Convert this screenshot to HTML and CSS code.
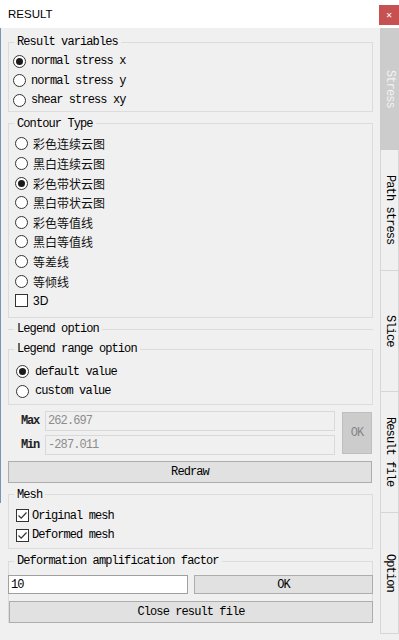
FILE: index.html
```html
<!DOCTYPE html>
<html>
<head>
<meta charset="utf-8">
<link rel="stylesheet" href="styles.css">
</head>
<body>
<div class="titlebar">
  <span class="title">RESULT</span>
  <span class="close">✕</span>
</div>
<div class="main">
  <div class="content">
    <fieldset class="group g-result">
      <legend>Result variables</legend>
      <div class="row p4"><span class="radio checked"></span><span>normal stress x</span></div>
      <div class="row p4"><span class="radio"></span><span>normal stress y</span></div>
      <div class="row p4"><span class="radio"></span><span>shear stress xy</span></div>
    </fieldset>

    <fieldset class="group g-contour">
      <legend>Contour Type</legend>
      <div class="row p6"><span class="radio"></span><span class="cjk">彩色连续云图</span></div>
      <div class="row p6"><span class="radio"></span><span class="cjk">黑白连续云图</span></div>
      <div class="row p6"><span class="radio checked"></span><span class="cjk">彩色带状云图</span></div>
      <div class="row p6"><span class="radio"></span><span class="cjk">黑白带状云图</span></div>
      <div class="row p6"><span class="radio"></span><span class="cjk">彩色等值线</span></div>
      <div class="row p6"><span class="radio"></span><span class="cjk">黑白等值线</span></div>
      <div class="row p6"><span class="radio"></span><span class="cjk">等差线</span></div>
      <div class="row p6"><span class="radio"></span><span class="cjk">等倾线</span></div>
      <div class="row p6"><span class="check"></span><span class="sans">3D</span></div>
    </fieldset>

    <fieldset class="group g-legend">
      <legend>Legend option</legend>
      <fieldset class="group g-range">
        <legend>Legend range option</legend>
        <div class="row p7"><span class="radio checked"></span><span>default value</span></div>
        <div class="row p7"><span class="radio"></span><span>custom value</span></div>
      </fieldset>
    </fieldset>

    <div class="range">
      <div class="range-fields">
        <div class="field"><span class="lbl">Max</span><span class="input disabled">262.697</span></div>
        <div class="field"><span class="lbl">Min</span><span class="input disabled">-287.011</span></div>
      </div>
      <span class="btn ok-disabled">OK</span>
    </div>

    <div class="btn wide redraw">Redraw</div>

    <fieldset class="group g-mesh">
      <legend>Mesh</legend>
      <div class="row p7c"><span class="check checked"><svg width="11" height="11" viewBox="0 0 11 11"><path d="M1.5 5.5 L4.2 8.2 L9.5 2.5" fill="none" stroke="#333" stroke-width="1.2"/></svg></span><span>Original mesh</span></div>
      <div class="row p7c"><span class="check checked"><svg width="11" height="11" viewBox="0 0 11 11"><path d="M1.5 5.5 L4.2 8.2 L9.5 2.5" fill="none" stroke="#333" stroke-width="1.2"/></svg></span><span>Deformed mesh</span></div>
    </fieldset>

    <fieldset class="group g-deform">
      <legend>Deformation amplification factor</legend>
      <div class="deform-row">
        <span class="input white">10</span>
        <span class="btn ok">OK</span>
      </div>
      <div class="btn wide closefile">Close result file</div>
    </fieldset>
  </div>

  <div class="tabs">
    <div class="tab active">Stress</div>
    <div class="tab">Path stress</div>
    <div class="tab">Slice</div>
    <div class="tab">Result file</div>
    <div class="tab">Option</div>
  </div>
</div>
</body>
</html>
```
FILE: styles.css
```css
* { box-sizing: border-box; }
html, body { margin: 0; padding: 0; }
body {
  width: 399px;
  height: 640px;
  overflow: hidden;
  background: linear-gradient(#7a93b8, #7a93b8) 0 28px / 1px 475px no-repeat, #f0f0f0;
  font-family: "Liberation Mono", "Noto Sans CJK SC", monospace;
  font-size: 12px;
  letter-spacing: -0.9px;
  color: #000;
}
legend, .row, .btn, .input, .lbl, .tab {
  font-family: "Liberation Mono", "Noto Sans CJK SC", monospace;
}
.titlebar {
  height: 28px;
  background: #fff;
  display: flex;
  justify-content: space-between;
  align-items: flex-start;
}
.title {
  font-family: "Liberation Sans", Arial, sans-serif;
  font-size: 11.5px;
  letter-spacing: 0;
  line-height: 28px;
  padding-left: 8px;
  color: #000;
}
.close {
  margin-top: 5px;
  width: 20px;
  height: 20px;
  background: #c75050;
  color: #fff;
  font-family: "DejaVu Sans", sans-serif;
  font-size: 8px;
  font-weight: bold;
  letter-spacing: 0;
  display: flex;
  align-items: center;
  justify-content: center;
}
.main {
  display: flex;
  height: 612px;
}
.content {
  width: 380px;
  padding-left: 8px;
}
.group {
  margin: 0;
  width: 365px;
  padding: 0;
  border: 1px solid #dcdcdc;
  min-width: 0;
}
.group > legend {
  margin-left: 5px;
  padding: 0 3px;
  line-height: 14px;
  height: 14px;
}
.row {
  display: flex;
  align-items: center;
  height: 19.6px;
  gap: 5px;
  white-space: nowrap;
}
.p4 { padding-left: 4px; }
.p6 { padding-left: 6px; gap: 5px; }
.p7 { padding-left: 7px; gap: 6px; }
.p7c { padding-left: 7px; gap: 3px; }
.row .cjk {
  font-family: "Noto Sans CJK SC", sans-serif;
  letter-spacing: 0;
  font-size: 12px;
  color: #111;
}
.row .sans {
  font-family: "Liberation Sans", sans-serif;
  letter-spacing: 0;
}
.radio {
  flex: none;
  width: 13px;
  height: 13px;
  border: 1px solid #333;
  border-radius: 50%;
  background: #fff;
  display: flex;
  align-items: center;
  justify-content: center;
}
.radio.checked::after {
  content: "";
  width: 7px;
  height: 7px;
  border-radius: 50%;
  background: #1a1a1a;
}
.check {
  flex: none;
  width: 13px;
  height: 13px;
  border: 1px solid #333;
  background: #fff;
  display: flex;
  align-items: center;
  justify-content: center;
}
.g-result { margin-top: 7px; padding: 2.5px 0 0.5px; }
.g-contour { margin-top: 5px; padding: 3.4px 0 6px; }
.g-legend {
  margin-top: 4.5px;
  border-left: none;
  border-right: none;
  border-bottom: none;
  padding: 0;
}
.g-legend > legend { margin-left: 6px; }
.g-range { margin-top: 6px; padding: 6px 0 2.6px; }

.range {
  display: flex;
  margin-top: 6px;
  width: 364px;
  padding-left: 13px;
  gap: 7px;
}
.range-fields {
  flex: 1;
  display: flex;
  flex-direction: column;
  gap: 4px;
}
.field {
  display: flex;
  align-items: center;
  height: 20px;
}
.lbl {
  width: 24px;
  font-weight: bold;
  letter-spacing: -1.2px;
  color: #222;
}
.input {
  flex: 1;
  height: 20px;
  display: flex;
  align-items: center;
  padding-left: 2px;
  font-size: 12px;
}
.input.disabled {
  background: #f0f0f0;
  border: 1px solid #d9d9d9;
  color: #8d8d8d;
}
.btn {
  display: flex;
  align-items: center;
  justify-content: center;
  background: #e1e1e1;
  border: 1px solid #adadad;
  color: #000;
}
.ok-disabled {
  margin-top: 1px;
  width: 30px;
  height: 42px;
  background: #cccccc;
  border: 1px solid #bfbfbf;
  color: #858585;
}
.wide { width: 364px; height: 22px; }
.redraw { margin-top: 6px; }
.g-mesh { margin-top: 5px; padding: 4px 0 3.5px; }
.g-deform {
  margin-top: 5px;
  padding: 7px 0 0;
  border-bottom: none;
}
.deform-row {
  display: flex;
  gap: 6px;
  height: 19px;
  margin: 0 -1px;
}
.input.white {
  flex: none;
  width: 180px;
  height: 19px;
  background: #fff;
  border: 1px solid #a0a0a0;
  padding-left: 2px;
}
.ok { flex: 1; height: 19px; }
.closefile { margin-top: 7px; margin-bottom: 0; }

.tabs {
  width: 19px;
  display: flex;
  flex-direction: column;
}
.tab {
  height: 121px;
  border: 1px solid #d6d6d6;
  border-top: none;
  background: #f0f0f0;
  writing-mode: vertical-rl;
  display: flex;
  align-items: center;
  justify-content: center;
  white-space: nowrap;
  color: #000;
}
.tab.active {
  height: 122px;
  background: #cccccc;
  border-color: #cccccc;
  color: #f2f2f2;
}
```
